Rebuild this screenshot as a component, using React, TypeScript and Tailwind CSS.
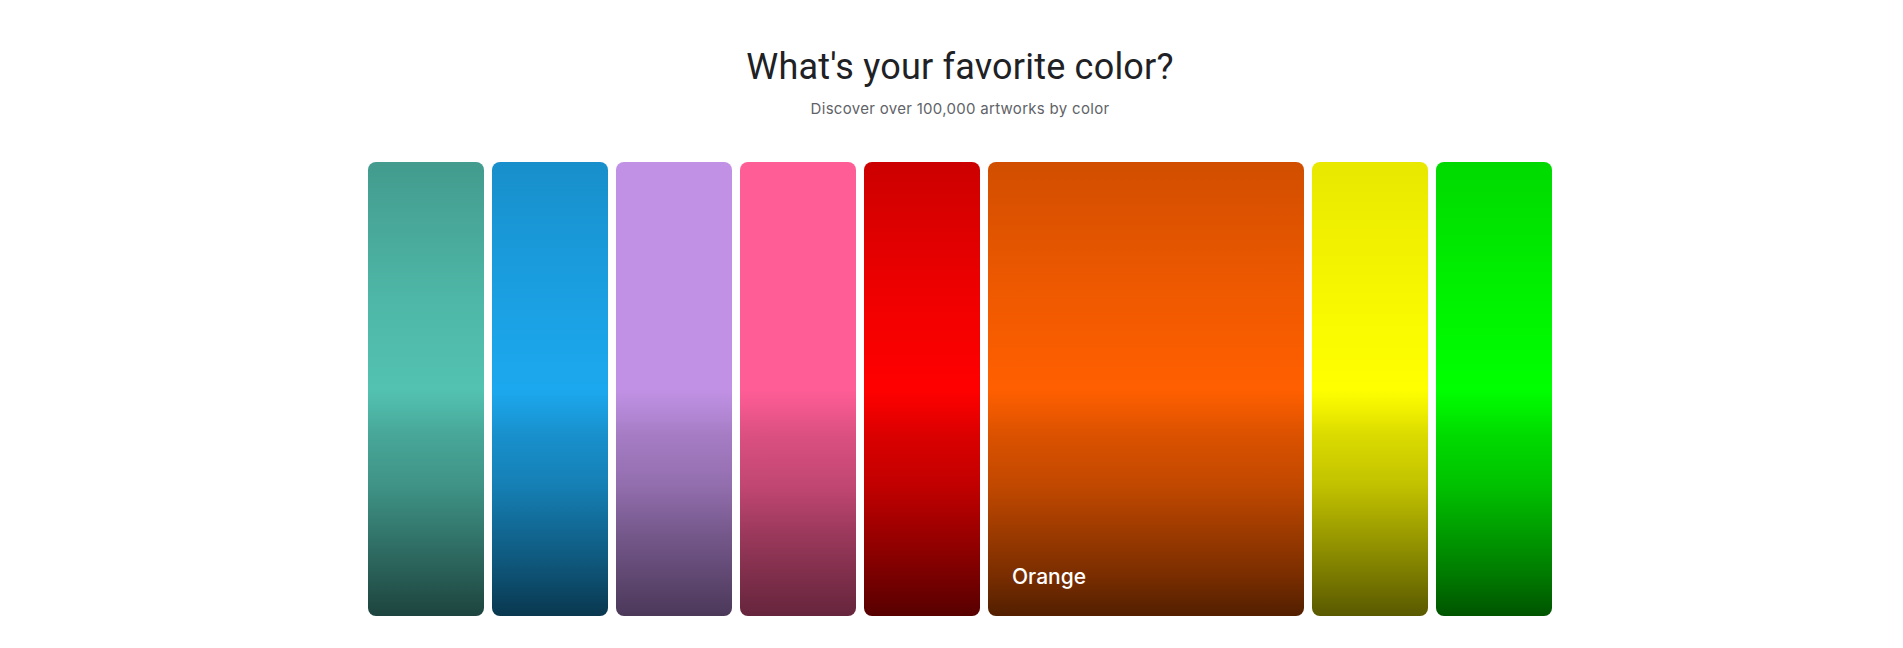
import React from "react";

type Card = { name: string; cls: string; wide?: boolean };

const cards: Card[] = [
  {
    name: "Teal",
    cls: "bg-[#53c2b1] bg-[linear-gradient(to_bottom,rgba(0,0,0,0.2)_0%,rgba(0,0,0,0.06)_30%,rgba(0,0,0,0)_50%,rgba(0,0,0,0.05)_54%,rgba(0,0,0,0.14)_60%,rgba(0,0,0,0.24)_71%,rgba(0,0,0,0.38)_81%,rgba(0,0,0,0.52)_91%,rgba(0,0,0,0.65)_100%)]",
  },
  {
    name: "Blue",
    cls: "bg-[#1ca8ee] bg-[linear-gradient(to_bottom,rgba(0,0,0,0.15)_0%,rgba(0,0,0,0.05)_30%,rgba(0,0,0,0)_50%,rgba(0,0,0,0.05)_54%,rgba(0,0,0,0.14)_60%,rgba(0,0,0,0.24)_71%,rgba(0,0,0,0.38)_81%,rgba(0,0,0,0.52)_91%,rgba(0,0,0,0.67)_100%)]",
  },
  {
    name: "Purple",
    cls: "bg-[#c191e5] bg-[linear-gradient(to_bottom,rgba(0,0,0,0)_0%,rgba(0,0,0,0)_50%,rgba(0,0,0,0.05)_54%,rgba(0,0,0,0.14)_60%,rgba(0,0,0,0.24)_71%,rgba(0,0,0,0.38)_81%,rgba(0,0,0,0.5)_91%,rgba(0,0,0,0.61)_100%)]",
  },
  {
    name: "Pink",
    cls: "bg-[#ff5d96] bg-[linear-gradient(to_bottom,rgba(0,0,0,0)_0%,rgba(0,0,0,0)_50%,rgba(0,0,0,0.05)_54%,rgba(0,0,0,0.14)_60%,rgba(0,0,0,0.24)_71%,rgba(0,0,0,0.38)_81%,rgba(0,0,0,0.5)_91%,rgba(0,0,0,0.6)_100%)]",
  },
  {
    name: "Red",
    cls: "bg-[#ff0000] bg-[linear-gradient(to_bottom,rgba(0,0,0,0.2)_0%,rgba(0,0,0,0.06)_30%,rgba(0,0,0,0)_50%,rgba(0,0,0,0.05)_54%,rgba(0,0,0,0.14)_60%,rgba(0,0,0,0.24)_71%,rgba(0,0,0,0.38)_81%,rgba(0,0,0,0.52)_91%,rgba(0,0,0,0.66)_100%)]",
  },
  {
    name: "Orange",
    wide: true,
    cls: "bg-[#ff5f00] bg-[linear-gradient(to_bottom,rgba(0,0,0,0.18)_0%,rgba(0,0,0,0.06)_30%,rgba(0,0,0,0)_50%,rgba(0,0,0,0.05)_54%,rgba(0,0,0,0.14)_60%,rgba(0,0,0,0.24)_71%,rgba(0,0,0,0.38)_81%,rgba(0,0,0,0.52)_91%,rgba(0,0,0,0.68)_100%)]",
  },
  {
    name: "Yellow",
    cls: "bg-[#ffff00] bg-[linear-gradient(to_bottom,rgba(0,0,0,0.09)_0%,rgba(0,0,0,0.03)_30%,rgba(0,0,0,0)_50%,rgba(0,0,0,0.05)_54%,rgba(0,0,0,0.14)_60%,rgba(0,0,0,0.24)_71%,rgba(0,0,0,0.38)_81%,rgba(0,0,0,0.52)_91%,rgba(0,0,0,0.65)_100%)]",
  },
  {
    name: "Green",
    cls: "bg-[#00ff00] bg-[linear-gradient(to_bottom,rgba(0,0,0,0.15)_0%,rgba(0,0,0,0.05)_30%,rgba(0,0,0,0)_50%,rgba(0,0,0,0.05)_54%,rgba(0,0,0,0.14)_60%,rgba(0,0,0,0.24)_71%,rgba(0,0,0,0.38)_81%,rgba(0,0,0,0.52)_91%,rgba(0,0,0,0.67)_100%)]",
  },
];

export default function App() {
  return (
    <div className="min-h-[648px] w-full bg-white pl-[17px] font-['Roboto','Open_Sans',sans-serif]">
      <div className="flex flex-col items-center pt-[45px]">
        <h1 className="text-[36px] leading-[44px] font-normal text-[#202124] tracking-[0.2px]">
          What's your favorite color?
        </h1>
        <p className="mt-[9.5px] font-['Inter',sans-serif] text-[15px] leading-[20px] tracking-[0.3px] text-[#5f6368]">
          Discover over 100,000 artworks by color
        </p>
        <div className="mt-[43px] flex gap-2">
          {cards.map((c) => (
            <div
              key={c.name}
              className={
                (c.wide ? "w-[316px] " : "w-[116px] ") +
                "relative h-[454px] overflow-hidden rounded-[8px] " +
                c.cls
              }
            >
              {c.wide && (
                <span className="absolute left-6 bottom-[27px] font-['Inter',sans-serif] text-[21px] leading-[24px] font-medium text-white">
                  {c.name}
                </span>
              )}
            </div>
          ))}
        </div>
      </div>
    </div>
  );
}
